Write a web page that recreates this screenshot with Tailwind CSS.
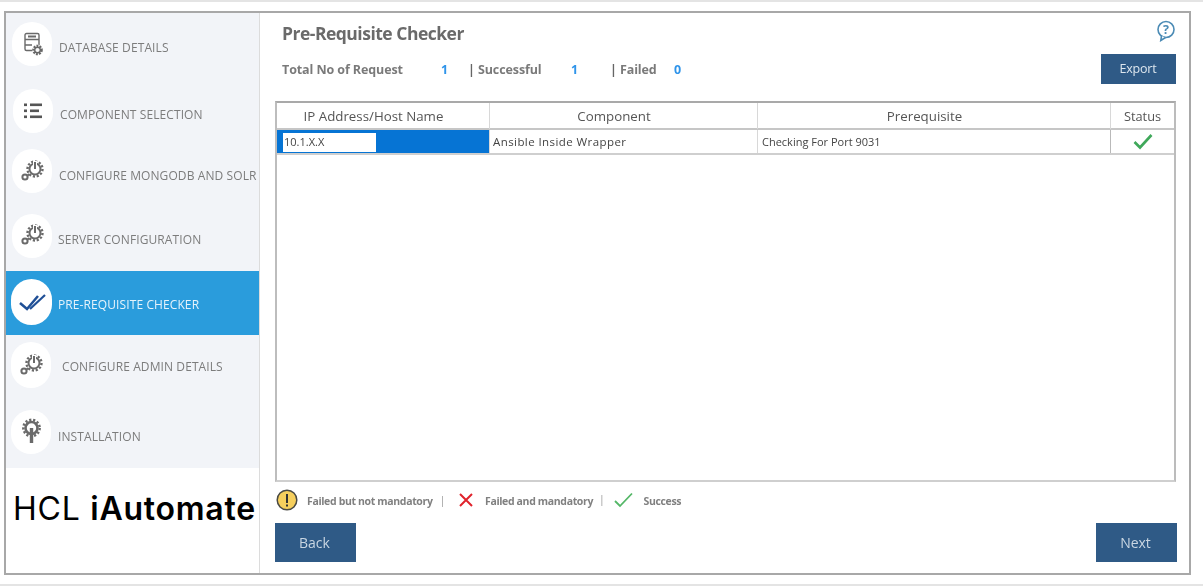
<!DOCTYPE html>
<html>
<head>
<meta charset="utf-8">
<script src="https://cdn.jsdelivr.net/npm/@tailwindcss/browser@4"></script>
</head>
<body class="bg-white font-['Open_Sans',sans-serif] overflow-hidden">
<div class="w-[1203px] h-[586px] bg-white border-t-2 border-[#e4e4e4] pt-[9px] pl-[4px] pr-[12px] pb-[10px] border-b-2">
  <div class="flex w-[1187px] h-[564px] border-2 border-[#a8a8a8]">
    <!-- sidebar -->
    <aside class="w-[254px] shrink-0 flex flex-col border-r border-[#dcdcdc]">
      <nav class="flex flex-col bg-[#f2f4f8] h-[455px] text-[12px] tracking-[0.1px] text-[#7c7c7c] blur-[0.4px] whitespace-nowrap">
        <div class="h-[66px] flex items-start pl-[6px] gap-[7px]">
          <div class="w-[40px] h-[44px] mt-[9px] rounded-full bg-white flex items-center justify-center">
            <svg width="24" height="24" viewBox="0 0 24 24" fill="none" stroke="#6a6a6a" stroke-width="1.4"><rect x="5" y="1.5" width="14" height="17" rx="1.5"/><path d="M5 7.5h14M5 13h7"/><path d="M8 4.5h8" stroke-width="2"/><circle cx="17.5" cy="18" r="5.5" fill="#f8f8f8" stroke="none"/><circle cx="17.5" cy="18" r="4" fill="none" stroke="#666" stroke-width="2.6" stroke-dasharray="1.8 1.1"/><circle cx="17.5" cy="18" r="2.8" fill="none" stroke="#666" stroke-width="1.4"/></svg>
          </div>
          <span class="mt-[26px]">DATABASE DETAILS</span>
        </div>
        <div class="h-[63px] flex items-start pl-[7px] gap-[7px]">
          <div class="w-[40px] h-[44px] mt-[10px] rounded-full bg-white flex items-center justify-center">
            <svg width="20" height="18" viewBox="0 0 20 18" fill="#555"><rect x="1" y="1.5" width="3" height="2.6"/><rect x="7" y="1.5" width="12" height="2.6"/><rect x="1" y="7.5" width="3" height="2.6"/><rect x="7" y="7.5" width="9" height="2.6"/><rect x="1" y="13.5" width="3" height="2.6"/><rect x="7" y="13.5" width="12" height="2.6"/></svg>
          </div>
          <span class="mt-[27px]">COMPONENT SELECTION</span>
        </div>
        <div class="h-[65px] flex items-start pl-[6px] gap-[7px]">
          <div class="w-[40px] h-[44px] mt-[7px] rounded-full bg-white flex items-center justify-center">
            <svg width="24" height="24" viewBox="0 0 24 24" fill="none" stroke="#6a6a6a"><circle cx="15" cy="10" r="5.5" stroke-width="2"/><circle cx="15" cy="10" r="7.5" stroke-width="2.4" stroke-dasharray="2.2 1.7"/><path d="M15 2v7" stroke="#fff" stroke-width="4"/><path d="M15 3v7" stroke-width="2"/><circle cx="5" cy="18" r="2.6" stroke-width="2"/><path d="M7.5 16.5l2-1.5" stroke-width="2"/></svg>
          </div>
          <span class="mt-[25px]">CONFIGURE MONGODB AND SOLR</span>
        </div>
        <div class="h-[64px] flex items-start pl-[6px] gap-[6px]">
          <div class="w-[40px] h-[44px] mt-[7px] rounded-full bg-white flex items-center justify-center">
            <svg class="mb-[3px]" width="24" height="24" viewBox="0 0 24 24" fill="none" stroke="#6a6a6a"><circle cx="15" cy="10" r="5.5" stroke-width="2"/><circle cx="15" cy="10" r="7.5" stroke-width="2.4" stroke-dasharray="2.2 1.7"/><path d="M15 2v7" stroke="#fff" stroke-width="4"/><path d="M15 3v7" stroke-width="2"/><circle cx="5" cy="18" r="2.6" stroke-width="2"/><path d="M7.5 16.5l2-1.5" stroke-width="2"/></svg>
          </div>
          <span class="mt-[24px]">SERVER CONFIGURATION</span>
        </div>
        <div class="h-[64px] flex items-start pl-[5px] gap-[6px] bg-[#2a9cdc] text-[#e6f3fb]">
          <div class="w-[41px] h-[46px] mt-[8px] rounded-full bg-white flex items-center justify-center">
            <svg width="28" height="18" viewBox="0 0 28 18" fill="none" stroke="#1f4f96" stroke-width="2.5"><path d="M2 10l7 6L20 3"/><path d="M12 16L27 2" stroke-width="2.2"/></svg>
          </div>
          <span class="mt-[25px]">PRE-REQUISITE CHECKER</span>
        </div>
        <div class="h-[65px] flex items-start pl-[5px] gap-[11px]">
          <div class="w-[40px] h-[46px] mt-[7px] rounded-full bg-white flex items-center justify-center">
            <svg width="24" height="24" viewBox="0 0 24 24" fill="none" stroke="#6a6a6a"><circle cx="15" cy="10" r="5.5" stroke-width="2"/><circle cx="15" cy="10" r="7.5" stroke-width="2.4" stroke-dasharray="2.2 1.7"/><path d="M15 2v7" stroke="#fff" stroke-width="4"/><path d="M15 3v7" stroke-width="2"/><circle cx="5" cy="18" r="2.6" stroke-width="2"/><path d="M7.5 16.5l2-1.5" stroke-width="2"/></svg>
          </div>
          <span class="mt-[23px]">CONFIGURE ADMIN DETAILS</span>
        </div>
        <div class="h-[68px] flex items-start pl-[5px] gap-[7px]">
          <div class="w-[40px] h-[44px] mt-[10px] rounded-full bg-white flex items-center justify-center">
            <svg width="24" height="28" viewBox="0 0 24 28" fill="none" stroke="#6a6a6a"><circle cx="12.5" cy="10" r="6" stroke-width="2.6"/><circle cx="12.5" cy="10" r="8.2" stroke-width="2.4" stroke-dasharray="2.2 1.8"/><path d="M12.5 10v15" stroke-width="3.4"/></svg>
          </div>
          <span class="mt-[28px]">INSTALLATION</span>
        </div>
      </nav>
      <div class="flex-1 bg-white pl-[7px] pt-[21px] font-['Inter',sans-serif] text-[32px] leading-[40px] tracking-[0.75px] text-black whitespace-nowrap">HCL <b class="font-semibold">iAutomate</b></div>
    </aside>
    <!-- main -->
    <main class="flex-1 min-w-0 pl-[15px] pr-[13px] flex flex-col">
      <div class="blur-[0.35px]">
        <div class="flex justify-between items-start h-[41px] pl-[7px]">
          <h1 class="text-[17.5px] font-bold text-[#6a6a6a] tracking-[-0.5px] mt-[8px] leading-[24px]">Pre-Requisite Checker</h1>
          <svg class="mt-[7px] mr-[0px]" width="20" height="22" viewBox="0 0 20 22" fill="none" stroke="#4b8bb5" stroke-width="1.6"><circle cx="10" cy="9.5" r="8"/><path d="M5.5 16l-.7 4.5 4.7-3" fill="#fff"/><text x="10" y="14" text-anchor="middle" font-size="12.5" font-weight="700" font-family="Open Sans" fill="#4b8bb5" stroke="none">?</text></svg>
        </div>
        <div class="flex justify-between items-center h-[30px] pl-[7px]">
          <div class="flex items-center pt-[2px] text-[12.5px] font-bold text-[#7a7a7a] tracking-[-0.1px]">
            <span class="w-[159px]">Total No of Request</span><span class="w-[27px] text-[#2f94ea]">1</span><span class="w-[103px] whitespace-nowrap text-[#666]">| <span class="text-[#7a7a7a]">Successful</span></span><span class="w-[39px] text-[#2f94ea]">1</span><span class="w-[63px] whitespace-nowrap text-[#666]">| <span class="text-[#7a7a7a]">Failed</span></span><span class="text-[#2f94ea] ml-[1px]">0</span>
          </div>
          <button class="w-[75px] h-[30px] bg-[#2f5a86] text-[#dde6ee] text-[12.5px] tracking-[-0.2px] pr-[1px] pt-[1px]">Export</button>
        </div>
        <div class="h-[17px]"></div>
        <!-- table -->
        <div class="h-[381px] border-2 border-[#c4c4c4] border-t-[#a9a9a9] border-r-[#bcbcbc] border-b-[#cfcfcf] border-l-[#bdbdbd] bg-white">
          <div class="grid grid-cols-[213px_268px_353px_1fr] h-[27px] border-b-2 border-[#c6c6c6] text-[13.3px] text-[#555] text-center items-center">
            <div class="h-full border-r border-[#d8d8d8] leading-[26px] pr-[19px]">IP Address/Host Name</div>
            <div class="h-full border-r border-[#d8d8d8] leading-[26px] pr-[19px]">Component</div>
            <div class="h-full border-r border-[#d8d8d8] leading-[26px] pr-[19px]">Prerequisite</div>
            <div class="h-full leading-[26px] text-[12.8px]">Status</div>
          </div>
          <div class="grid grid-cols-[213px_268px_353px_1fr] h-[25px] border-b-2 border-[#cfcfcf] text-[11.5px] text-[#444] items-center">
            <div class="h-full bg-[#0674d4] border-r border-[#d8d8d8] pl-[6px] flex items-start pt-[3px]">
              <span class="block w-[93px] h-[19px] bg-white text-[#444] text-[11px] leading-[17px] pl-[1px]">10.1.X.X</span>
            </div>
            <div class="h-full border-r border-[#d8d8d8] pl-[3px] leading-[23px] tracking-[0.42px]">Ansible Inside Wrapper</div>
            <div class="h-full border-r border-[#b9b9b9] pl-[4px] leading-[23px] text-[11px]">Checking For Port 9031</div>
            <div class="h-full flex items-center justify-center">
              <svg width="20" height="17" viewBox="0 0 20 17" fill="none" stroke="#3fa85a" stroke-width="2.6"><path d="M1.5 9l5.5 5.5L18.5 2"/></svg>
            </div>
          </div>
        </div>
        <!-- legend -->
        <div class="flex items-center h-[36px] text-[10.5px] font-bold text-[#808080] tracking-[-0.35px]">
          <svg class="ml-[1px]" width="22" height="22" viewBox="0 0 22 22"><circle cx="11" cy="11" r="9.8" fill="#f6cf5d" stroke="#4a4a44" stroke-width="1.5"/><rect x="10" y="5" width="2" height="9" fill="#333"/><rect x="10" y="15.5" width="2" height="2" fill="#333"/></svg>
          <span class="ml-[9px] mt-[4px] whitespace-nowrap">Failed but not mandatory</span>
          <span class="ml-[7px] mt-[2px] font-normal text-[#999]">|</span>
          <svg class="ml-[14px]" width="14" height="14" viewBox="0 0 14 14" fill="none" stroke="#e0232c" stroke-width="2"><path d="M1 1l12 12M13 1L1 13"/></svg>
          <span class="ml-[12px] mt-[4px] whitespace-nowrap">Failed and mandatory</span>
          <span class="ml-[6px] font-normal text-[#999]">|</span>
          <svg class="ml-[10px]" width="19" height="16" viewBox="0 0 19 16" fill="none" stroke="#54b767" stroke-width="1.8"><path d="M1 9l5 5L18 1.5"/></svg>
          <span class="ml-[10px] mt-[4px]">Success</span>
        </div>
        <div class="flex justify-between mt-[5px]">
          <button class="w-[81px] h-[39px] bg-[#2f5a86] text-[#c9d6e2] text-[14px] pr-[2px]">Back</button>
          <button class="w-[81px] h-[39px] mr-[-1px] bg-[#2f5a86] text-[#c9d6e2] text-[14px] pr-[2px]">Next</button>
        </div>
      </div>
    </main>
  </div>
</div>
</body>
</html>
